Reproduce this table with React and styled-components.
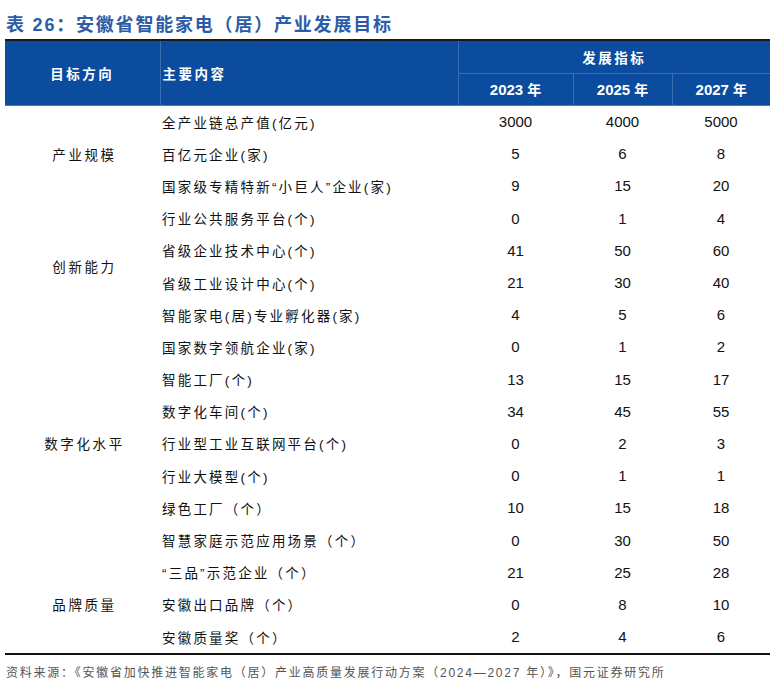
import React from "react";
import styled, { createGlobalStyle } from "styled-components";

const Global = createGlobalStyle`
  html, body { margin: 0; padding: 0; background: #fff; }
  body { font-family: "Liberation Sans", "Noto Sans CJK SC", sans-serif; }
`;

const Page = styled.div`
  width: 776px;
  height: 685px;
  padding: 12px 6px 0 5px;
  box-sizing: border-box;
`;

const Title = styled.h1`
  margin: 0 0 0 1px;
  height: 27px;
  line-height: 27px;
  font-family: "Liberation Sans", "Noto Sans CJK SC", sans-serif;
  font-size: 18px;
  font-weight: 700;
  letter-spacing: 1.8px;
  color: #2c5ca8;
`;

const Table = styled.table`
  width: 765px;
  border-collapse: collapse;
  table-layout: fixed;
  border-top: 2px solid #1a1a1a;
  border-bottom: 2px solid #111;
`;

const Head = styled.thead`
  background: #0b4c9f;
  border-bottom: 1px solid #6f7478;
`;

const Th = styled.th`
  height: ${(p) => p.$h || 32}px;
  padding: 0 ${(p) => (p.$left ? "0 0 2px" : "0")};
  text-align: ${(p) => (p.$left ? "left" : "center")};
  vertical-align: middle;
  color: #fff;
  font-weight: 700;
  font-size: ${(p) => (p.$year ? 15 : 13.5)}px;
  letter-spacing: ${(p) => (p.$year ? 0 : 2.5)}px;
  font-family: "Liberation Sans", "Noto Sans CJK SC", sans-serif;
  border-left: ${(p) => (p.$divL ? "1px solid #3b6db3" : "none")};
  border-bottom: ${(p) => (p.$divB ? "1px solid #3b6db3" : "none")};
  box-sizing: border-box;
`;

const Year = styled.span`
  & small {
    font-size: 14px;
    font-weight: 700;
    margin-left: 4px;
  }
`;

const Td = styled.td`
  height: 32.2px;
  padding: 0;
  vertical-align: middle;
  font-size: 13.5px;
  color: #111;
  font-family: "Liberation Sans", "Noto Sans CJK SC", sans-serif;
`;

const GroupCell = styled(Td)`
  text-align: center;
  letter-spacing: 2.6px;
  padding-left: 4px;
`;

const ItemCell = styled(Td)`
  padding-left: 2px;
  letter-spacing: 2.2px;
  white-space: nowrap;
`;

const NumCell = styled(Td)`
  text-align: center;
  font-size: 15px;
  letter-spacing: 0;
`;

const Source = styled.p`
  margin: 8px 0 0 1px;
  font-size: 12px;
  color: #555;
  letter-spacing: 1.75px;
  font-family: "Liberation Sans", "Noto Sans CJK SC", sans-serif;
`;

const groups = [
  {
    name: "产业规模",
    rows: [
      ["全产业链总产值(亿元)", "3000", "4000", "5000"],
      ["百亿元企业(家)", "5", "6", "8"],
      ["国家级专精特新“小巨人”企业(家)", "9", "15", "20"],
    ],
  },
  {
    name: "创新能力",
    rows: [
      ["行业公共服务平台(个)", "0", "1", "4"],
      ["省级企业技术中心(个)", "41", "50", "60"],
      ["省级工业设计中心(个)", "21", "30", "40"],
      ["智能家电(居)专业孵化器(家)", "4", "5", "6"],
    ],
  },
  {
    name: "数字化水平",
    rows: [
      ["国家数字领航企业(家)", "0", "1", "2"],
      ["智能工厂(个)", "13", "15", "17"],
      ["数字化车间(个)", "34", "45", "55"],
      ["行业型工业互联网平台(个)", "0", "2", "3"],
      ["行业大模型(个)", "0", "1", "1"],
      ["绿色工厂（个）", "10", "15", "18"],
      ["智慧家庭示范应用场景（个）", "0", "30", "50"],
    ],
  },
  {
    name: "品牌质量",
    rows: [
      ["“三品”示范企业（个）", "21", "25", "28"],
      ["安徽出口品牌（个）", "0", "8", "10"],
      ["安徽质量奖（个）", "2", "4", "6"],
    ],
  },
];

export default function App() {
  return (
    <Page>
      <Global />
      <Title>表 26：安徽省智能家电（居）产业发展目标</Title>
      <Table>
        <colgroup>
          <col style={{ width: 155 }} />
          <col style={{ width: 298 }} />
          <col style={{ width: 115 }} />
          <col style={{ width: 99 }} />
          <col style={{ width: 98 }} />
        </colgroup>
        <Head>
          <tr>
            <Th rowSpan={2} $h={32}>目标方向</Th>
            <Th rowSpan={2} $left $divL>主要内容</Th>
            <Th colSpan={3} $divL $divB $h={33}>发展指标</Th>
          </tr>
          <tr>
            {["2023", "2025", "2027"].map((y) => (
              <Th key={y} $year $divL $h={32}>
                <Year>
                  {y}
                  <small>年</small>
                </Year>
              </Th>
            ))}
          </tr>
        </Head>
        <tbody>
          {groups.map((g) =>
            g.rows.map((r, i) => (
              <tr key={r[0]}>
                {i === 0 && <GroupCell rowSpan={g.rows.length}>{g.name}</GroupCell>}
                <ItemCell>{r[0]}</ItemCell>
                <NumCell>{r[1]}</NumCell>
                <NumCell>{r[2]}</NumCell>
                <NumCell>{r[3]}</NumCell>
              </tr>
            ))
          )}
        </tbody>
      </Table>
      <Source>
        资料来源：《安徽省加快推进智能家电（居）产业高质量发展行动方案（2024—2027 年）》，国元证券研究所
      </Source>
    </Page>
  );
}
